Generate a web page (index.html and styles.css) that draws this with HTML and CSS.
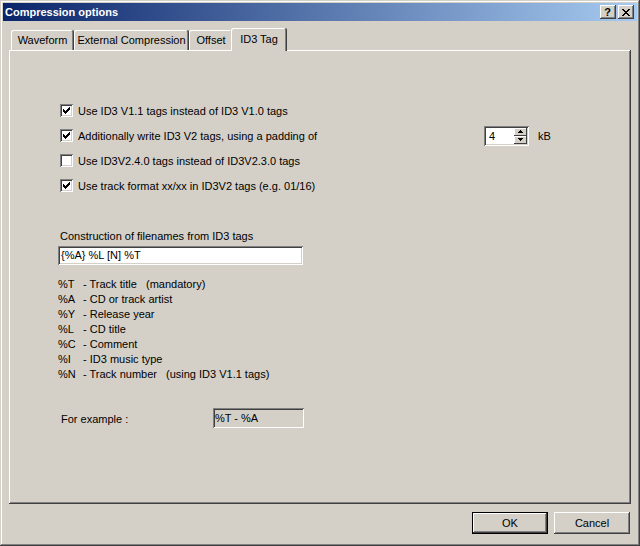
FILE: index.html
```html
<!DOCTYPE html>
<html>
<head>
  <meta charset="UTF-8">
  <title>Compression options</title>
  <link rel="stylesheet" href="styles.css">
</head>
<body>
  <div class="window">
    <div class="titlebar">
      <span class="title">Compression options</span>
      <div class="caption-btns">
        <span class="cbtn help">?</span>
        <span class="cbtn close">
          <svg width="8" height="7" viewBox="0 0 8 7" shape-rendering="crispEdges"><path d="M0 0h2v1H0zM6 0h2v1H6zM1 1h2v1H1zM5 1h2v1H5zM2 2h4v1H2zM3 3h2v1H3zM2 4h4v1H2zM1 5h2v1H1zM5 5h2v1H5zM0 6h2v1H0zM6 6h2v1H6z"/></svg>
        </span>
      </div>
    </div>

    <div class="client">
      <div class="tabs">
        <div class="tab t-wave">Waveform</div>
        <div class="tab t-ext">External Compression</div>
        <div class="tab t-off">Offset</div>
        <div class="tab active">ID3 Tag</div>
      </div>

      <div class="panel">
        <div class="checks">
          <div class="check-row">
            <span class="box"><svg width="13" height="13" viewBox="0 0 13 13" shape-rendering="crispEdges"><path d="M3 5h1v3H3zM4 6h1v3H4zM5 7h1v3H5zM6 6h1v3H6zM7 5h1v3H7zM8 4h1v3H8zM9 3h1v3H9z"/></svg></span>
            <span>Use ID3 V1.1 tags instead of ID3 V1.0 tags</span>
          </div>
          <div class="check-row padding-row">
            <div class="check-cell">
              <span class="box"><svg width="13" height="13" viewBox="0 0 13 13" shape-rendering="crispEdges"><path d="M3 5h1v3H3zM4 6h1v3H4zM5 7h1v3H5zM6 6h1v3H6zM7 5h1v3H7zM8 4h1v3H8zM9 3h1v3H9z"/></svg></span>
              <span>Additionally write ID3 V2 tags, using a padding of</span>
            </div>
            <div class="spin">
              <span class="spin-val">4</span>
              <div class="spin-btns">
                <span class="sb"><svg width="5" height="3" viewBox="0 0 5 3" shape-rendering="crispEdges"><path d="M2 0h1v1H2zM1 1h3v1H1zM0 2h5v1H0z"/></svg></span>
                <span class="sb"><svg width="5" height="3" viewBox="0 0 5 3" shape-rendering="crispEdges"><path d="M0 0h5v1H0zM1 1h3v1H1zM2 2h1v1H2z"/></svg></span>
              </div>
            </div>
            <span class="unit">kB</span>
          </div>
          <div class="check-row">
            <span class="box"></span>
            <span>Use ID3V2.4.0 tags instead of ID3V2.3.0 tags</span>
          </div>
          <div class="check-row">
            <span class="box"><svg width="13" height="13" viewBox="0 0 13 13" shape-rendering="crispEdges"><path d="M3 5h1v3H3zM4 6h1v3H4zM5 7h1v3H5zM6 6h1v3H6zM7 5h1v3H7zM8 4h1v3H8zM9 3h1v3H9z"/></svg></span>
            <span>Use track format xx/xx in ID3V2 tags (e.g. 01/16)</span>
          </div>
        </div>

        <div class="field-label">Construction of filenames from ID3 tags</div>
        <div class="textbox">{%A} %L [N] %T</div>

        <ul class="legend">
          <li><span class="code">%T</span><span class="d1">- Track title</span>(mandatory)</li>
          <li><span class="code">%A</span>- CD or track artist</li>
          <li><span class="code">%Y</span>- Release year</li>
          <li><span class="code">%L</span>- CD title</li>
          <li><span class="code">%C</span>- Comment</li>
          <li><span class="code">%I</span>- ID3 music type</li>
          <li><span class="code">%N</span><span class="d2">- Track number</span>(using ID3 V1.1 tags)</li>
        </ul>

        <div class="example">
          <span class="example-label">For example :</span>
          <div class="readonly">%T - %A</div>
        </div>
      </div>

      <div class="buttons">
        <button class="btn default">OK</button>
        <button class="btn">Cancel</button>
      </div>
    </div>
  </div>
</body>
</html>
```

FILE: styles.css
```css
* {
  margin: 0;
  padding: 0;
  box-sizing: border-box;
}

body {
  background: #d4d0c8;
  font: 11px "Liberation Sans", Arial, sans-serif;
  color: #000;
}

.window {
  width: 640px;
  height: 546px;
  padding: 3px;
  background: #d4d0c8;
  box-shadow: inset -1px -1px #404040, inset 1px 1px #d4d0c8, inset -2px -2px #808080, inset 2px 2px #fff;
  display: flex;
  flex-direction: column;
}

/* title bar */
.titlebar {
  height: 18px;
  display: flex;
  align-items: center;
  justify-content: space-between;
  padding: 0 3px 0 2px;
  background: linear-gradient(to right, #0a246a, #a6caf0);
}
.title {
  color: #fff;
  font-weight: bold;
  font-size: 11px;
}
.caption-btns {
  display: flex;
  gap: 2px;
}
.cbtn {
  width: 16px;
  height: 14px;
  background: #d4d0c8;
  box-shadow: inset -1px -1px #404040, inset 1px 1px #fff, inset -2px -2px #808080;
  display: flex;
  justify-content: center;
  align-items: center;
}
.help {
  font-weight: bold;
  font-size: 11px;
  line-height: 14px;
  padding-right: 1px;
}
.close svg {
  margin-left: -1px;
}

/* body */
.client {
  flex: 1;
  padding: 7px 6px 0;
  display: flex;
  flex-direction: column;
}

.tabs {
  display: flex;
  align-items: flex-end;
  height: 22px;
  padding-left: 2px;
}
.tab {
  height: 20px;
  text-align: center;
  line-height: 21px;
  background: #d4d0c8;
  border-radius: 2px 2px 0 0;
  box-shadow: inset -1px 0 #404040, inset 1px 1px #fff, inset -2px 0 #808080;
}
.t-wave { width: 63px; }
.t-ext { width: 115px; }
.t-off { width: 44px; }
.tab.active {
  width: 56px;
  height: 23px;
  margin-left: -2px;
  margin-bottom: -1px;
  line-height: 22px;
  position: relative;
  z-index: 1;
  box-shadow: inset -1px 0 #404040, inset 1px 1px #fff, inset -2px 0 #808080;
}

.panel {
  height: 454px;
  padding: 48px 0 0 49px;
  box-shadow: inset -1px -1px #404040, inset 1px 1px #fff, inset -2px -2px #808080;
}

.check-row {
  height: 25px;
  display: flex;
  align-items: center;
  padding-left: 2px;
}
.check-cell {
  width: 424px;
  display: flex;
  align-items: center;
}
.box {
  width: 13px;
  height: 13px;
  margin-right: 5px;
  background: #fff;
  box-shadow: inset 1px 1px #808080, inset -1px -1px #fff, inset 2px 2px #404040, inset -2px -2px #d4d0c8;
}
.box svg {
  display: block;
}

.spin {
  width: 45px;
  height: 20px;
  padding: 2px;
  background: #fff;
  display: flex;
  box-shadow: inset 1px 1px #808080, inset -1px -1px #fff, inset 2px 2px #404040, inset -2px -2px #d4d0c8;
}
.spin-val {
  flex: 1;
  padding-left: 3px;
  line-height: 16px;
}
.spin-btns {
  width: 13px;
  display: flex;
  flex-direction: column;
}
.sb {
  height: 8px;
  background: #d4d0c8;
  box-shadow: inset -1px -1px #404040, inset 1px 1px #fff;
  display: flex;
  justify-content: center;
  align-items: center;
}
.unit {
  margin-left: 9px;
}

.field-label {
  margin-top: 31px;
  padding-left: 2px;
  line-height: 14px;
}
.textbox {
  margin-top: 3px;
  width: 245px;
  height: 19px;
  padding: 0 3px;
  line-height: 19px;
  background: #fff;
  box-shadow: inset 1px 1px #808080, inset -1px -1px #fff, inset 2px 2px #404040, inset -2px -2px #d4d0c8;
}

.legend {
  list-style: none;
  margin-top: 12px;
}
.legend li {
  line-height: 15px;
  height: 15px;
}
.code {
  display: inline-block;
  width: 25px;
}
.d1 {
  display: inline-block;
  width: 63px;
}
.d2 {
  display: inline-block;
  width: 83px;
}

.example {
  margin-top: 26px;
  display: flex;
  align-items: center;
  padding-left: 3px;
}
.example-label {
  width: 152px;
  padding-top: 2px;
}
.readonly {
  width: 91px;
  height: 20px;
  padding: 0 2px;
  line-height: 20px;
  background: #d4d0c8;
  box-shadow: inset 1px 1px #808080, inset -1px -1px #fff, inset 2px 2px #404040, inset -2px -2px #d4d0c8;
}

.buttons {
  margin-top: 8px;
  display: flex;
  justify-content: flex-end;
  gap: 6px;
  padding-right: 1px;
}
.btn {
  width: 76px;
  height: 22px;
  border: none;
  background: #d4d0c8;
  font: 11px "Liberation Sans", Arial, sans-serif;
  color: #000;
  box-shadow: inset -1px -1px #404040, inset 1px 1px #fff, inset -2px -2px #808080;
}
.btn.default {
  box-shadow: inset 0 0 0 1px #000, inset -2px -2px #404040, inset 2px 2px #fff, inset -3px -3px #808080;
}
```
